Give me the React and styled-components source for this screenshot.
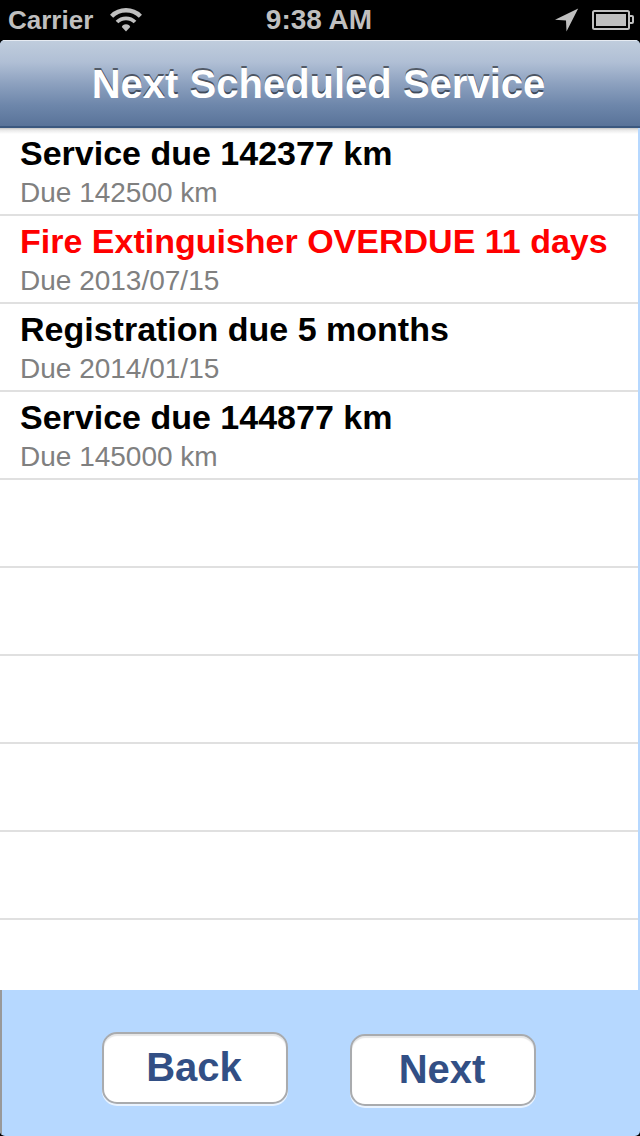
import React from 'react'
import styled, { createGlobalStyle } from 'styled-components'

const services = [
  { title: 'Service due 142377 km', detail: 'Due 142500 km' },
  { title: 'Fire Extinguisher OVERDUE 11 days', detail: 'Due 2013/07/15', overdue: true },
  { title: 'Registration due 5 months', detail: 'Due 2014/01/15' },
  { title: 'Service due 144877 km', detail: 'Due 145000 km' },
]

const emptyRows = 6

function WifiIcon() {
  return (
    <svg width="32" height="24" viewBox="0 0 32 24" fill="none" stroke="#bfbfbf">
      <path d="M1.6 8.2 A20.5 20.5 0 0 1 30.4 8.2" strokeWidth="4.4" />
      <path d="M7 14 A12.8 12.8 0 0 1 25 14" strokeWidth="3.8" />
      <path d="M16 23.4 L11.8 19 Q12.6 16.2 16 16.2 Q19.4 16.2 20.2 19 Z" fill="#bfbfbf" stroke="none" />
    </svg>
  )
}

function LocationIcon() {
  return (
    <svg width="24" height="24" viewBox="0 0 24 24">
      <path d="M23.2 0.4 L11.5 23.4 L11 12.4 L0 11.8 Z" fill="#bfbfbf" />
    </svg>
  )
}

function BatteryIcon() {
  return (
    <svg width="43" height="20" viewBox="0 0 43 20" fill="none" stroke="#bfbfbf" strokeWidth="2">
      <rect x="1" y="1" width="36" height="18" rx="1.5" />
      <rect x="4" y="4" width="30" height="12" fill="#bfbfbf" stroke="none" />
      <path d="M38 6 H40 Q41 6 41 7 V12 Q41 13 40 13 H38" />
    </svg>
  )
}

function App() {
  return (
    <AppStyled>
      <GlobalStyle />
      <StatusBar>
        <Carrier>
          Carrier
          <WifiIcon />
        </Carrier>
        <Clock>9:38 AM</Clock>
        <StatusIcons>
          <LocationIcon />
          <BatteryIcon />
        </StatusIcons>
      </StatusBar>
      <Screen>
        <NavBar>
          <h1>Next Scheduled Service</h1>
        </NavBar>
        <ServiceList>
          {services.map((service) => (
            <Row key={service.title}>
              <RowTitle $overdue={service.overdue}>{service.title}</RowTitle>
              <RowDetail>{service.detail}</RowDetail>
            </Row>
          ))}
          {Array.from({ length: emptyRows }, (_, i) => (
            <Row key={i} />
          ))}
        </ServiceList>
        <Footer>
          <Button>Back</Button>
          <Button $drop={2}>Next</Button>
        </Footer>
      </Screen>
    </AppStyled>
  )
}

const GlobalStyle = createGlobalStyle`
* {
  box-sizing: border-box;
}
body {
  margin: 0;
  background: #000;
  font-family: "Liberation Sans", Arial, sans-serif;
}
`

const AppStyled = styled.div`
width: 640px;
height: 1136px;
display: flex;
flex-direction: column;
overflow: hidden;
background: #000;
`

const StatusBar = styled.div`
height: 40px;
flex: none;
display: grid;
grid-template-columns: 1fr auto 1fr;
align-items: center;
padding: 0 5px 0 8px;
color: #bfbfbf;
font-size: 26px;
font-weight: bold;
line-height: 40px;
`

const Carrier = styled.div`
display: flex;
align-items: center;
gap: 17px;
`

const Clock = styled.div`
white-space: nowrap;
padding-right: 5px;
font-size: 28px;
`

const StatusIcons = styled.div`
display: flex;
align-items: center;
justify-content: flex-end;
gap: 13px;
`

const Screen = styled.div`
flex: 1;
display: flex;
flex-direction: column;
min-height: 0;
border-radius: 5px;
overflow: hidden;
background: #b6d8ff;
`

const NavBar = styled.header`
height: 88px;
flex: none;
background: linear-gradient(#c0cddd, #b0bfd5 25%, #8da1bf 50%, #6e87ab 75%, #597399);
border-top: 1px solid #e6ebf2;
border-bottom: 2px solid #3b587f;
h1 {
  margin: 0;
  font-size: 40px;
  line-height: 86px;
  text-align: center;
  padding-right: 3px;
  color: #fff;
  text-shadow: 0 -2px 0 rgba(0, 0, 0, 0.5);
  white-space: nowrap;
}
`

const ServiceList = styled.div`
flex: 1;
min-height: 0;
overflow: hidden;
margin-right: 2px;
background: linear-gradient(#c4c4c4, #e8e8e8 2px, #fff 6px);
`

const Row = styled.div`
height: 88px;
padding: 4px 0 0 20px;
border-bottom: 2px solid #e0e0e0;
white-space: nowrap;
&:last-child {
  border-bottom: none;
}
`

const RowTitle = styled.div`
font-size: 34px;
font-weight: bold;
line-height: 42px;
color: ${(props) => (props.$overdue ? '#ff0000' : '#000')};
`

const RowDetail = styled.div`
font-size: 28px;
line-height: 38px;
color: #808080;
`

const Footer = styled.footer`
height: 146px;
flex: none;
display: flex;
align-items: flex-start;
gap: 62px;
padding: 42px 0 0 100px;
border-left: 2px solid #999;
`

const Button = styled.button`
width: 186px;
height: 72px;
margin: ${(props) => props.$drop || 0}px 0 0;
padding: 0 2px 2px 0;
border: 2px solid #a9abae;
border-radius: 15px;
background: #fff;
box-shadow: 0 2px 0 rgba(255, 255, 255, 0.7), inset 0 2px 1px #e6e6e6;
color: #324f85;
font-family: inherit;
font-size: 40px;
font-weight: bold;
line-height: 66px;
`

export default App
